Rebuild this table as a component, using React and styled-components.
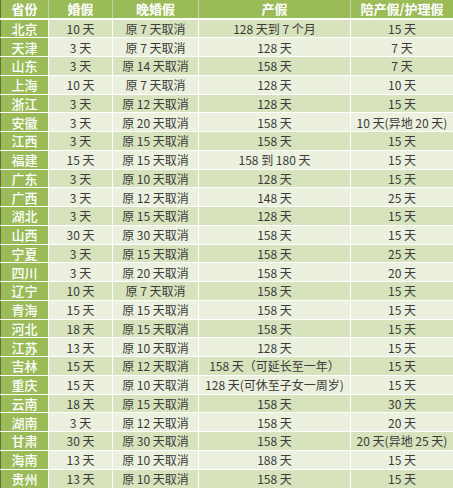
import React from "react";
import styled, { createGlobalStyle } from "styled-components";

const GlobalStyle = createGlobalStyle`
  body {
    margin: 0;
    background: #ffffff;
    font-family: "Noto Sans CJK SC", "Liberation Sans", sans-serif;
  }
`;

const Table = styled.table`
  width: 453px;
  border-collapse: collapse;
  table-layout: fixed;
  border-left: 1px solid #5f7339;
  border-right: 1px solid #5f7339;
`;

const HeadRow = styled.tr`
  height: 19px;
  border-bottom: 2px solid #ffffff;
`;

const HeadCell = styled.th`
  background: #9bbb59;
  color: #ffffff;
  font-size: 13px;
  font-weight: 700;
  padding: 0;
  text-align: center;
  line-height: 18px;
  border-right: 1px solid #c4d6a0;
  &:last-child {
    border-right: none;
  }
`;

const Row = styled.tr`
  height: 18.76px;
  border-bottom: 1px solid #ffffff;
  &:last-child {
    border-bottom: none;
  }
`;

const ProvinceCell = styled.td`
  background: #9bbb59;
  color: #ffffff;
  font-size: 13px;
  font-weight: 500;
  text-align: center;
  padding: 0;
  line-height: 17px;
  border-right: 1px solid #ffffff;
`;

const Cell = styled.td`
  background: ${(p) => (p.$band ? "#d6e3bc" : "#ebf1de")};
  color: #3b3b3b;
  font-size: 12px;
  text-align: center;
  padding: 0;
  line-height: 17px;
  white-space: nowrap;
  border-right: 1px solid #ffffff;
  &:last-child {
    border-right: none;
  }
`;

const columns = [48, 64, 86, 152, 103];
const headers = ["省份", "婚假", "晚婚假", "产假", "陪产假/护理假"];

const rows = [
  ["北京", "10 天", "原 7 天取消", "128 天到 7 个月", "15 天"],
  ["天津", "3 天", "原 7 天取消", "128 天", "7 天"],
  ["山东", "3 天", "原 14 天取消", "158 天", "7 天"],
  ["上海", "10 天", "原 7 天取消", "128 天", "10 天"],
  ["浙江", "3 天", "原 12 天取消", "128 天", "15 天"],
  ["安徽", "3 天", "原 20 天取消", "158 天", "10 天(异地 20 天)"],
  ["江西", "3 天", "原 15 天取消", "158 天", "15 天"],
  ["福建", "15 天", "原 15 天取消", "158 到 180 天", "15 天"],
  ["广东", "3 天", "原 10 天取消", "128 天", "15 天"],
  ["广西", "3 天", "原 12 天取消", "148 天", "25 天"],
  ["湖北", "3 天", "原 15 天取消", "128 天", "15 天"],
  ["山西", "30 天", "原 30 天取消", "158 天", "15 天"],
  ["宁夏", "3 天", "原 15 天取消", "158 天", "25 天"],
  ["四川", "3 天", "原 20 天取消", "158 天", "20 天"],
  ["辽宁", "10 天", "原 7 天取消", "158 天", "15 天"],
  ["青海", "15 天", "原 15 天取消", "158 天", "15 天"],
  ["河北", "18 天", "原 15 天取消", "158 天", "15 天"],
  ["江苏", "13 天", "原 10 天取消", "128 天", "15 天"],
  ["吉林", "15 天", "原 12 天取消", "158 天（可延长至一年）", "15 天"],
  ["重庆", "15 天", "原 10 天取消", "128 天(可休至子女一周岁)", "15 天"],
  ["云南", "18 天", "原 15 天取消", "158 天", "30 天"],
  ["湖南", "3 天", "原 12 天取消", "158 天", "20 天"],
  ["甘肃", "30 天", "原 30 天取消", "158 天", "20 天(异地 25 天)"],
  ["海南", "13 天", "原 10 天取消", "188 天", "15 天"],
  ["贵州", "13 天", "原 10 天取消", "158 天", "15 天"],
];

export default function App() {
  return (
    <>
      <GlobalStyle />
      <Table>
        <colgroup>
          {columns.map((w, i) => (
            <col key={i} style={{ width: w }} />
          ))}
        </colgroup>
        <thead>
          <HeadRow>
            {headers.map((h) => (
              <HeadCell key={h}>{h}</HeadCell>
            ))}
          </HeadRow>
        </thead>
        <tbody>
          {rows.map(([province, ...cells], i) => (
            <Row key={province}>
              <ProvinceCell>{province}</ProvinceCell>
              {cells.map((c, j) => (
                <Cell key={j} $band={i % 2 === 0}>
                  {c}
                </Cell>
              ))}
            </Row>
          ))}
        </tbody>
      </Table>
    </>
  );
}
